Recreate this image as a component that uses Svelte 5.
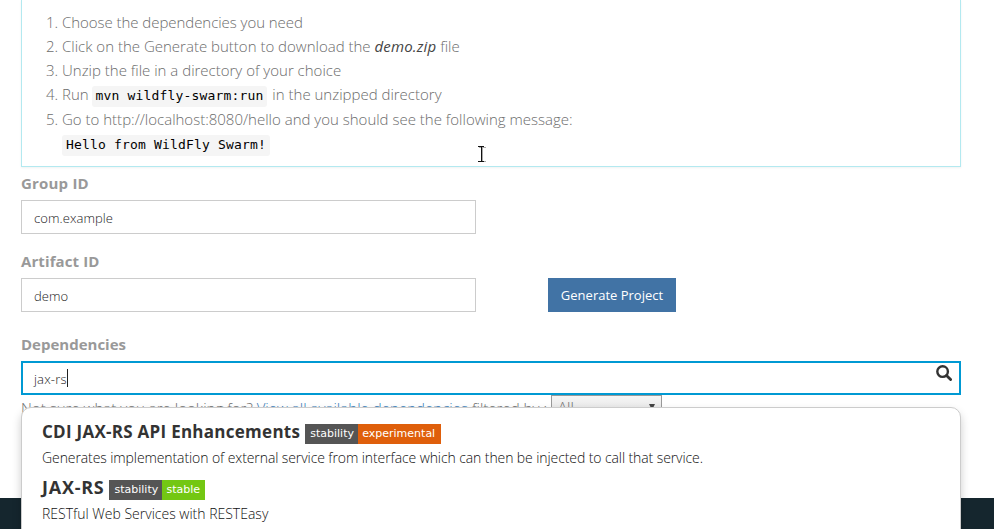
<script>
  const group = 'com.example';
  const artifact = 'demo';
  const query = 'jax-rs';
  const results = [
    { name: 'CDI JAX-RS API Enhancements', level: 'experimental', kind: 'cdi',
      text: 'Generates implementation of external service from interface which can then be injected to call that service.' },
    { name: 'JAX-RS', level: 'stable', kind: 'jaxrs', text: 'RESTful Web Services with RESTEasy' }
  ];
</script>

<div class="page">
  <main>
    <section class="steps">
      <ol>
        <li><span class="num">1.</span><span class="s1">Choose the dependencies you need</span></li>
        <li><span class="num">2.</span><span class="s2">Click on the Generate button to download the <em>demo.zip</em> file</span></li>
        <li><span class="num">3.</span><span class="s3">Unzip the file in a directory of your choice</span></li>
        <li><span class="num">4.</span><span class="s4">Run <code>mvn wildfly-swarm:run</code> in the unzipped directory</span></li>
        <li class="last"><span class="num">5.</span><span class="s5">Go to http://localhost:8080/hello and you should see the following message:</span></li>
      </ol>
      <div class="message"><code>Hello from WildFly Swarm!</code></div>
      <svg class="pointer" width="9" height="18" viewBox="0 0 9 18" shape-rendering="crispEdges">
        <path d="M1 2h3v1h1v-1h3M4.5 2v14M1 16h3v-1h1v1h3" fill="none" stroke="#aaa" transform="translate(.7 .7)" />
        <path d="M1 1.5h6M1 16.5h6M4.5 2v14" fill="none" stroke="#111" />
      </svg>
    </section>

    <div class="label g">Group ID</div>
    <div class="input">{group}</div>
    <div class="label a">Artifact ID</div>
    <div class="row">
      <div class="input">{artifact}</div>
      <button>Generate Project</button>
    </div>
    <div class="label d">Dependencies</div>
    <div class="input search">
      <span class="query">{query}</span><i class="caret"></i>
      <svg class="glass" width="16" height="16" viewBox="0 0 16 16">
        <circle cx="6.6" cy="6.6" r="5.3" fill="none" stroke="#333" stroke-width="2.4" />
        <path d="M10.5 10.5l4.1 4.1" stroke="#333" stroke-width="2.8" stroke-linecap="round" />
      </svg>
    </div>
    <div class="hint">
      <span class="hint-text">Not sure what you are looking for? <a href="#all">View all available dependencies</a> filtered by :</span>
      <div class="select"><span>All</span><svg width="8" height="6" viewBox="0 0 8 6"><path d="M1 0h6L4 6z" fill="#444" /></svg></div>
    </div>
  </main>
  <footer></footer>
  <div class="menu">
    {#each results as r}
      <article>
        <div class="title">
          <strong class={r.kind}>{r.name}</strong>
          <span class="badge"><span class="key">stability</span><span class="level {r.level}">{r.level}</span></span>
        </div>
        <p class={r.kind}>{r.text}</p>
      </article>
    {/each}
  </div>
</div>

<style>
  :global(body) { margin: 0; }
  .page {
    position: relative; width: 994px; height: 529px; overflow: hidden; background: #fff;
    display: flex; flex-direction: column;
    font: 300 15px/24px "Open Sans", "Noto Sans", sans-serif; color: #6c6c6c;
  }
  .page * { box-sizing: border-box; white-space: nowrap; }
  main { height: 498px; flex: none; padding: 0 33px 0 21px; }
  footer { height: 31px; flex: none; background: #15262e; }
  .steps {
    position: relative; height: 167px; border: 1px solid #b3e9f0; border-top: 0;
    box-shadow: 0 1px 2px #f0f2f2; padding: 10px 0 0 20px;
  }
  ol { list-style: none; margin: 0; padding: 0; }
  li { display: flex; height: 24px; }
  li.last { height: 27px; line-height: 26px; }
  .num { width: 20px; flex: none; padding-left: 4px; }
  .s1 { letter-spacing: -.05px; }
  em { font-weight: 500; color: #444; letter-spacing: .15px; }
  code {
    font: 13px/20px "DejaVu Sans Mono", monospace; color: #000; background: #f5f5f5; letter-spacing: .17px;
    border-radius: 3px; padding: 0 4px; display: inline-block; height: 21px;
  }
  .s4 code { margin-left: -1px; margin-right: 1px; }
  .message { margin-left: 20px; height: 24px; display: flex; align-items: center; }
  .pointer { position: absolute; left: 455px; top: 145px; }
  .label { font-weight: 700; color: #999; line-height: 22px; height: 24px; letter-spacing: .2px; }
  .g { margin-top: 5px; margin-bottom: 4px; }
  .a { margin-top: 16px; margin-bottom: 4px; letter-spacing: .1px; }
  .d { margin-top: 21px; margin-bottom: 4px; letter-spacing: 0; }
  .input {
    width: 455px; height: 34px; border: 1px solid #ccc; padding: 1px 12px 0; flex: none;
    font-size: 13px; line-height: 33px; color: #222; letter-spacing: .08px;
  }
  .row { display: flex; gap: 72px; }
  button {
    width: 128px; height: 34px; padding: 0; border: 0; background: #4173a5; color: #fff;
    font: 400 13px/34px "Open Sans", sans-serif;
  }
  .search { width: 940px; border: 2px solid #0099d3; padding: 1px 7px 0 11px; display: flex; line-height: 31px; }
  .query { letter-spacing: .17px; }
  .caret { width: 1px; height: 18px; background: #222; margin-top: 5px; }
  .glass { margin: 1px 0 0 auto; }
  .hint { display: flex; height: 26px; }
  .hint-text { line-height: 27px; letter-spacing: .025px; }
  .hint a { color: #337ab7; text-decoration: none; }
  .select {
    width: 111px; height: 24px; margin-left: 4px; border: 1px solid #999;
    background: linear-gradient(#f6f6f6, #ddd); padding: 0 5px 0 6px;
    display: flex; align-items: center; justify-content: space-between;
  }
  .menu {
    position: absolute; left: 21px; top: 407px; width: 940px; height: 140px; background: #fff;
    border: 1px solid #ccc; border-radius: 10px; box-shadow: 0 5px 10px rgba(0, 0, 0, .2);
    padding: 11px 20px 0;
  }
  article { height: 56px; }
  .title { display: flex; height: 28px; }
  strong { font-size: 17px; font-weight: 700; line-height: 25px; color: #333; }
  strong.cdi { letter-spacing: .27px; }
  strong.jaxrs { font-size: 18px; letter-spacing: .75px; }
  .badge { display: flex; margin: 5px 0 0 5px; height: 20px; font: 11px/20px "DejaVu Sans", sans-serif; color: #fff; }
  .key { background: #555; width: 53px; padding-left: 5px; }
  .level { padding-left: 4px; }
  .experimental { background: #df5f0b; width: 83px; }
  .stable { background: #73c713; width: 43px; }
  p { margin: 0; font-size: 14px; line-height: 22px; color: #111; }
  p.cdi { letter-spacing: -.093px; }
</style>
